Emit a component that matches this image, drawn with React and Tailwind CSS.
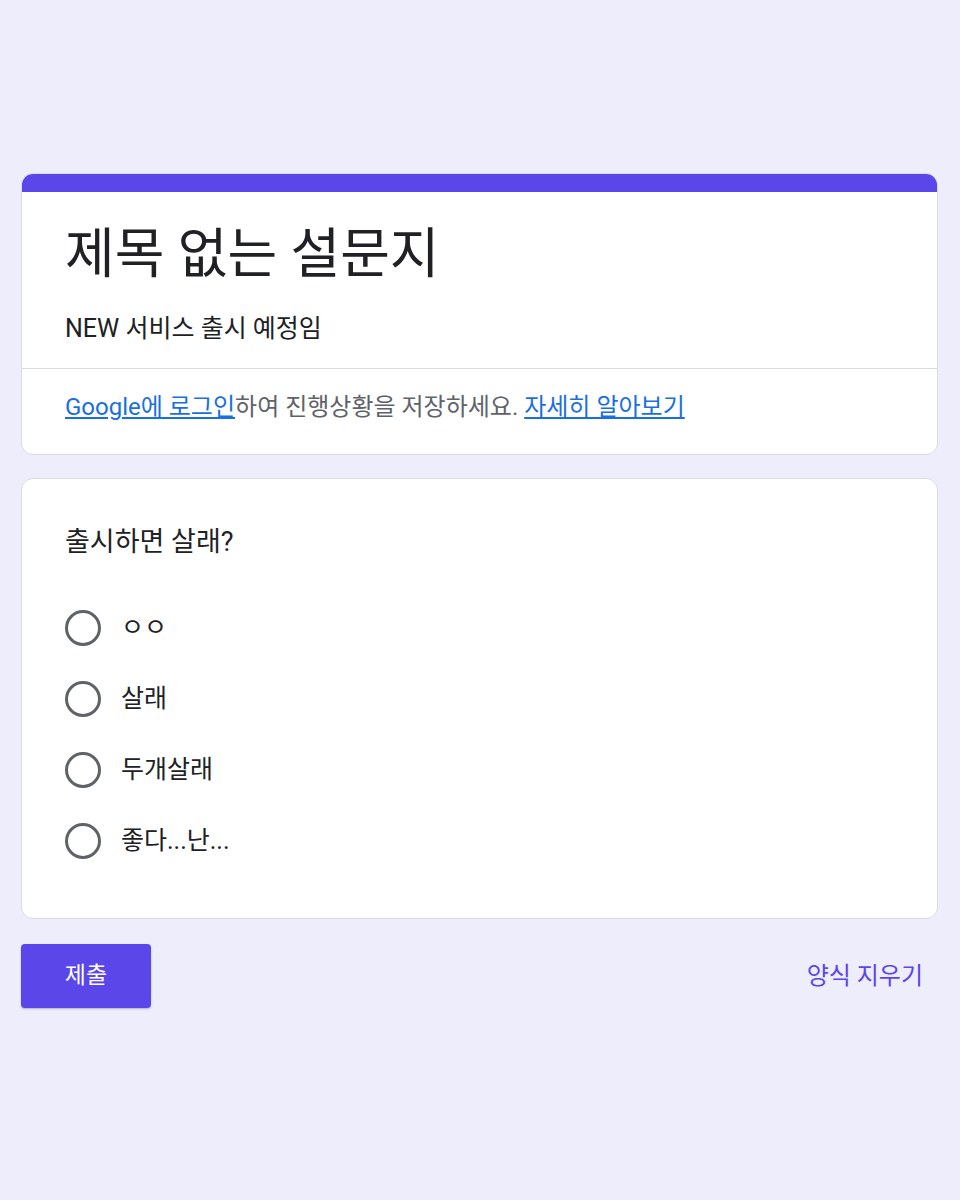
import React, { useState } from 'react';

const options = ['ㅇㅇ', '살래', '두개살래', '좋다...난...'];

const App = () => {
  const [picked, setPicked] = useState(null);

  return (
    <div
      className="min-h-[1200px] bg-[#eeedfc] pl-[21px] pr-[22px] pt-[173px] text-[#202124]"
      style={{ fontFamily: 'Roboto, "Noto Sans CJK KR", sans-serif' }}
    >
      {/* Header card */}
      <div className="bg-white rounded-[12px] border border-[#dadce0] overflow-hidden">
        <div className="h-[18px] bg-[#5b46ea]" />
        <div className="px-[43px] pt-[26px] pb-[22px]">
          <h1 className="text-[54px] leading-[74px]">제목 없는 설문지</h1>
          <p className="mt-[20px] text-[25px] leading-[34px]">NEW 서비스 출시 예정임</p>
        </div>
        <div className="border-t border-[#dadce0] px-[43px] pt-[21px] pb-[30px] text-[24px] leading-[34px] text-[#5f6368]">
          <a href="#" className="text-[#1a6fe0] underline">Google에 로그인</a>
          하여 진행상황을 저장하세요.{' '}
          <a href="#" className="text-[#1a6fe0] underline">자세히 알아보기</a>
        </div>
      </div>

      {/* Question card */}
      <div className="mt-[23px] bg-white rounded-[12px] border border-[#dadce0] px-[43px] pt-[46px] pb-[53px]">
        <div className="text-[27px] leading-[34px]">출시하면 살래?</div>
        <div className="mt-[45px] flex flex-col gap-[23px]">
          {options.map((opt, i) => (
            <label key={opt} className="flex items-center gap-[20px] cursor-pointer" onClick={() => setPicked(i)}>
              <span className="w-[36px] h-[36px] rounded-full border-[3px] border-[#5f6368] flex items-center justify-center">
                {picked === i && <span className="w-[16px] h-[16px] rounded-full bg-[#5b46ea]" />}
              </span>
              <span className="text-[25px] leading-[48px]">{opt}</span>
            </label>
          ))}
        </div>
      </div>

      {/* Actions */}
      <div className="mt-[25px] flex items-center justify-between">
        <button className="w-[130px] h-[64px] rounded-[4px] bg-[#5b46ea] text-white text-[23px] shadow-[0_1px_2px_rgba(0,0,0,0.25)]">
          제출
        </button>
        <button className="pr-[15px] text-[24px] text-[#5b46ea]" onClick={() => setPicked(null)}>
          양식 지우기
        </button>
      </div>
    </div>
  );
};

export default App;
